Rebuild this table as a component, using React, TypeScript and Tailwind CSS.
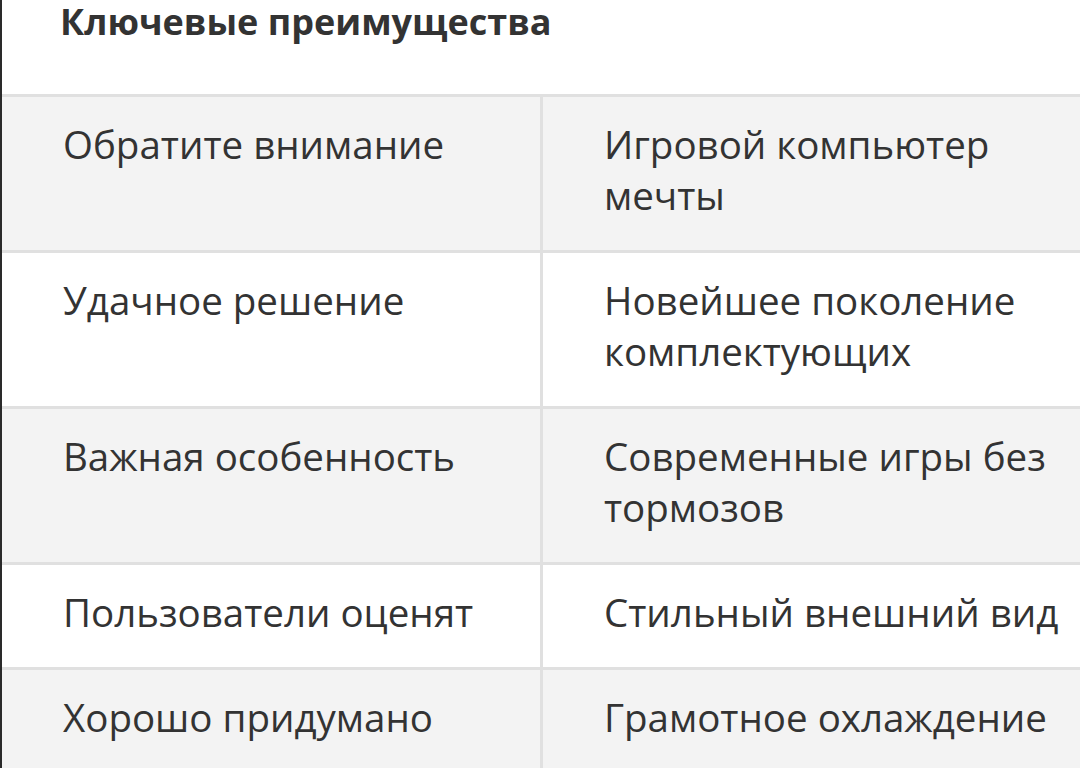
import React from "react";

const rows: [string, string][] = [
  ["Обратите внимание", "Игровой компьютер мечты"],
  ["Удачное решение", "Новейшее поколение комплектующих"],
  ["Важная особенность", "Современные игры без тормозов"],
  ["Пользователи оценят", "Стильный внешний вид"],
  ["Хорошо придумано", "Грамотное охлаждение"],
];

export default function App() {
  return (
    <div
      className="w-[1080px] h-[768px] overflow-hidden bg-white border-l-2 border-[#2a2a2a] text-[#333333]"
      style={{ fontFamily: '"Open Sans", "Noto Sans", sans-serif' }}
    >
      <h2 className="h-[94px] pl-[58px] text-[36px] font-bold leading-[44px] m-0">
        Ключевые преимущества
      </h2>
      <div className="w-[1150px]">
        {rows.map(([a, b], i) => (
          <div
            key={i}
            className={`flex border-t-[3px] border-[#e0e0e0] ${
              i % 2 === 0 ? "bg-[#f3f3f3]" : "bg-white"
            }`}
          >
            <div className="w-[541px] shrink-0 border-r-[3px] border-[#e0e0e0] pl-[61px] pr-[30px] pt-[22px] pb-[29px] text-[38.5px] leading-[51px]">
              {a}
            </div>
            <div className="flex-1 pl-[61px] pr-[60px] pt-[22px] pb-[29px] text-[38.5px] leading-[51px]">
              {b}
            </div>
          </div>
        ))}
      </div>
    </div>
  );
}
